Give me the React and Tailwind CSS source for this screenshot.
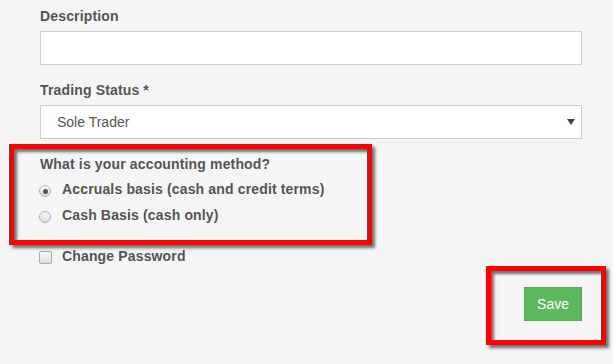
import React from "react";

const Radio = ({ checked }) => (
  <span className="mt-[6px] ml-[-1px] flex h-[12px] w-[12px] shrink-0 items-center justify-center rounded-full border border-[#b4b4b4] bg-gradient-to-b from-[#fafafa] to-[#dcdcdc]">
    {checked && <span className="h-[5px] w-[5px] rounded-full bg-[#555]" />}
  </span>
);

const Highlight = ({ className }) => (
  <div
    className={
      "pointer-events-none absolute border-[5px] border-[#ff0000] shadow-[3px_3px_3px_rgba(0,0,0,0.55),inset_3px_3px_3px_rgba(0,0,0,0.55)] " +
      className
    }
  />
);

const App = () => {
  return (
    <div className="relative min-h-[364px] w-full overflow-hidden bg-[#f5f5f5] font-['Liberation_Sans',Arial,sans-serif] text-[14px] text-[#555]">
      <div className="w-[582px] pl-10 pt-[6px]">
        {/* description */}
        <label className="mb-[5px] block font-bold leading-5 tracking-[0.15px]">Description</label>
        <div className="h-[34px] w-full border border-[#ccc] bg-white" />

        {/* trading status */}
        <label className="mb-[5px] mt-[15px] block font-bold leading-5 tracking-[0.15px]">
          Trading Status *
        </label>
        <div className="flex h-[34px] w-full items-center justify-between border border-[#ccc] bg-white pl-4 pr-[6px]">
          <span>Sole Trader</span>
          <svg width="8" height="6" viewBox="0 0 8 6">
            <polygon points="0,0 8,0 4,6" fill="#444" />
          </svg>
        </div>

        {/* accounting method */}
        <p className="mt-[15px] font-bold leading-5 tracking-[0.15px]">What is your accounting method?</p>
        <div className="mt-[5px] flex gap-[11px]">
          <Radio checked />
          <span className="font-bold leading-5 tracking-[0.15px]">Accruals basis (cash and credit terms)</span>
        </div>
        <div className="mt-[6px] flex gap-[11px]">
          <Radio />
          <span className="font-bold leading-5 tracking-[0.15px]">Cash Basis (cash only)</span>
        </div>

        <div className="mt-[21px] flex gap-[10px]">
          <span className="mt-[5px] ml-[-1px] h-[13px] w-[13px] shrink-0 rounded-[2px] border border-[#a8a8a8] bg-gradient-to-b from-[#fcfcfc] to-[#dedede]" />
          <span className="font-bold leading-5 tracking-[0.15px]">Change Password</span>
        </div>

        <div className="mt-[21px] flex justify-end">
          <button className="h-[34px] border border-[#4cae4c] bg-[#5cb85c] px-3 text-white">
            Save
          </button>
        </div>
      </div>

      <Highlight className="left-[9px] top-[144px] h-[101px] w-[363px]" />
      <Highlight className="left-[486px] top-[266px] h-[79px] w-[120px]" />
    </div>
  );
};

export default App;
